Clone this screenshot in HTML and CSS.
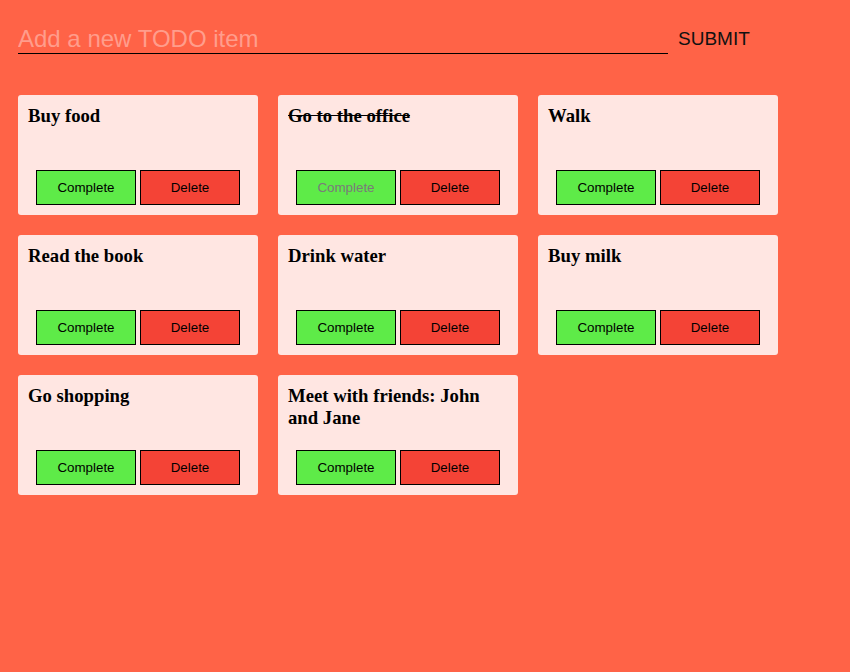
FILE: index.html
```html
<!DOCTYPE html>
<html>
<head>
<meta charset="utf-8">
<link rel="stylesheet" href="styles.css">
</head>
<body>
<div class="app">
  <form class="add-form">
    <input class="add-input" type="text" placeholder="Add a new TODO item">
    <button class="submit" type="button">SUBMIT</button>
  </form>
  <div class="grid">
    <div class="card"><h3 class="title">Buy food</h3><div class="actions"><button class="btn complete">Complete</button><button class="btn delete">Delete</button></div></div>
    <div class="card"><h3 class="title done">Go to the office</h3><div class="actions"><button class="btn complete" disabled>Complete</button><button class="btn delete">Delete</button></div></div>
    <div class="card"><h3 class="title">Walk</h3><div class="actions"><button class="btn complete">Complete</button><button class="btn delete">Delete</button></div></div>
    <div class="card"><h3 class="title">Read the book</h3><div class="actions"><button class="btn complete">Complete</button><button class="btn delete">Delete</button></div></div>
    <div class="card"><h3 class="title">Drink water</h3><div class="actions"><button class="btn complete">Complete</button><button class="btn delete">Delete</button></div></div>
    <div class="card"><h3 class="title">Buy milk</h3><div class="actions"><button class="btn complete">Complete</button><button class="btn delete">Delete</button></div></div>
    <div class="card"><h3 class="title">Go shopping</h3><div class="actions"><button class="btn complete">Complete</button><button class="btn delete">Delete</button></div></div>
    <div class="card"><h3 class="title">Meet with friends: John and Jane</h3><div class="actions"><button class="btn complete">Complete</button><button class="btn delete">Delete</button></div></div>
  </div>
</div>
</body>
</html>
```

FILE: styles.css
```css
html, body {
  margin: 0;
  padding: 0;
  background: #ff6347;
  min-height: 100%;
}
body {
  font-family: "Liberation Serif", "Times New Roman", serif;
}
.app {
  padding: 22px 18px;
}
.add-form {
  display: flex;
  align-items: center;
  gap: 10px;
  margin: 0;
}
.add-input {
  width: 650px;
  height: 32px;
  box-sizing: border-box;
  padding: 2px 0 0 0;
  margin: 0;
  border: none;
  border-bottom: 1px solid #000;
  background: transparent;
  font-family: "Liberation Sans", Arial, sans-serif;
  font-size: 24px;
  color: #000;
  outline: none;
}
.add-input::placeholder {
  color: #ff9d8c;
}
.submit {
  background: transparent;
  border: none;
  padding: 2px 0 0 0;
  margin: 0;
  font-family: "Liberation Sans", Arial, sans-serif;
  font-size: 19px;
  color: #111;
  line-height: 22px;
}
.grid {
  margin-top: 41px;
  display: grid;
  grid-template-columns: repeat(3, 240px);
  gap: 20px;
}
.card {
  height: 120px;
  box-sizing: border-box;
  padding: 10px;
  background: #ffe6e2;
  border-radius: 3px;
  display: flex;
  flex-direction: column;
  justify-content: space-between;
}
.title {
  margin: 0;
  font-size: 18.72px;
  font-weight: bold;
  color: #000;
}
.title.done {
  text-decoration: line-through;
}
.actions {
  display: flex;
  justify-content: center;
  gap: 4px;
}
.btn {
  width: 100px;
  height: 35px;
  box-sizing: border-box;
  margin: 0;
  padding: 0;
  border: 1px solid #000;
  border-radius: 0;
  font-family: "Liberation Sans", Arial, sans-serif;
  font-size: 13.33px;
  color: #000;
}
.complete {
  background: #5eeb48;
}
.complete:disabled {
  color: #7a7a7a;
}
.delete {
  background: #f44336;
}
```
